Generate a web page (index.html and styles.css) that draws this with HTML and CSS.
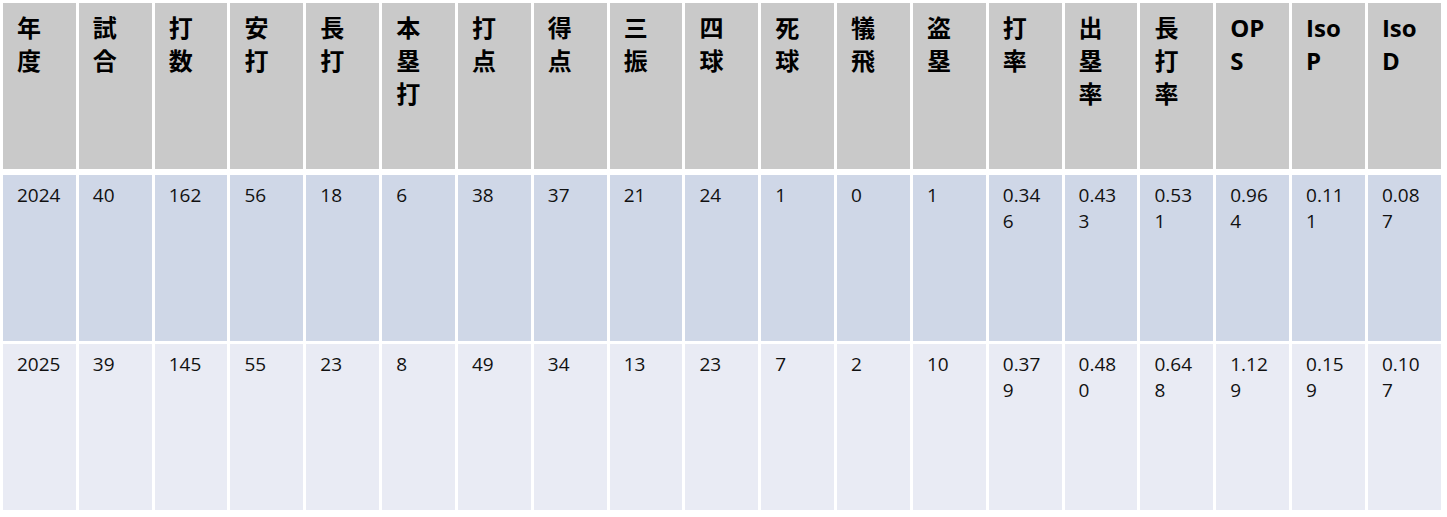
FILE: index.html
```html
<!DOCTYPE html>
<html lang="ja">
<head>
<meta charset="utf-8">
<title>成績</title>
<link rel="stylesheet" href="styles.css">
</head>
<body>
<table class="stats">
  <thead>
    <tr>
      <th>年度</th><th>試合</th><th>打数</th><th>安打</th><th>長打</th><th>本塁打</th><th>打点</th><th>得点</th><th>三振</th><th>四球</th><th>死球</th><th>犠飛</th><th>盗塁</th><th>打率</th><th>出塁率</th><th>長打率</th><th>OPS</th><th>IsoP</th><th>IsoD</th>
    </tr>
  </thead>
  <tbody>
    <tr class="odd">
      <td>2024</td><td>40</td><td>162</td><td>56</td><td>18</td><td>6</td><td>38</td><td>37</td><td>21</td><td>24</td><td>1</td><td>0</td><td>1</td><td>0.346</td><td>0.433</td><td>0.531</td><td>0.964</td><td>0.111</td><td>0.087</td>
    </tr>
    <tr class="even">
      <td>2025</td><td>39</td><td>145</td><td>55</td><td>23</td><td>8</td><td>49</td><td>34</td><td>13</td><td>23</td><td>7</td><td>2</td><td>10</td><td>0.379</td><td>0.480</td><td>0.648</td><td>1.129</td><td>0.159</td><td>0.107</td>
    </tr>
  </tbody>
</table>
</body>
</html>
```

FILE: styles.css
```css
html, body {
  margin: 0;
  padding: 0;
  background: #ffffff;
}

.stats {
  width: 1444px;
  table-layout: fixed;
  border-collapse: separate;
  border-spacing: 3px;
  font-family: "Open Sans", "Noto Sans CJK JP", sans-serif;
  color: #000000;
}

.stats th,
.stats td {
  vertical-align: top;
  text-align: left;
  padding: 0 14px 0 14px;
  word-break: break-all;
  overflow-wrap: anywhere;
}

.stats th {
  height: 166px;
  box-sizing: border-box;
  background: #c9c9c9;
  font-size: 24px;
  font-weight: 700;
  line-height: 33px;
  padding-top: 8px;
  border-bottom: 3px solid #ffffff;
  background-clip: padding-box;
  height: 169px;
}

.stats td {
  height: 166px;
  box-sizing: border-box;
  font-size: 19px;
  font-weight: 400;
  line-height: 26px;
  padding-top: 7px;
  color: #111111;
}

.stats tr.odd td {
  background: #cfd7e7;
}

.stats tr.even td {
  background: #e9ebf4;
}
```
